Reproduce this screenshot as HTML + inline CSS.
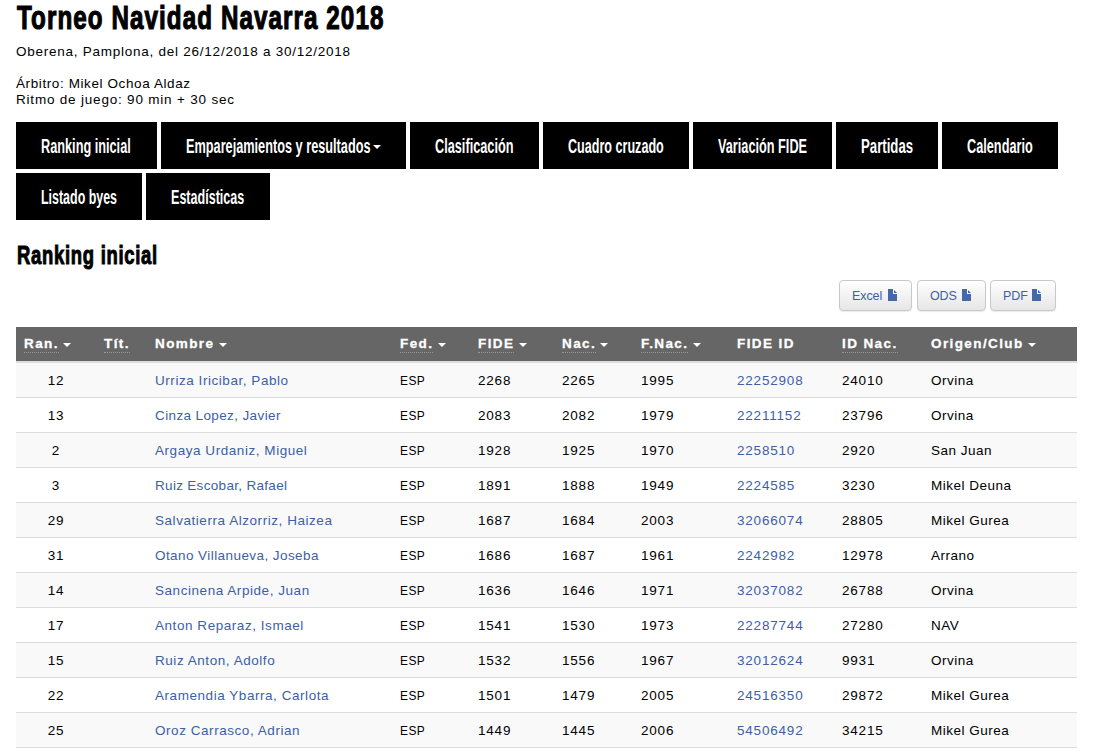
<!DOCTYPE html>
<html><head><meta charset="utf-8">
<style>
*{box-sizing:border-box}
html,body{margin:0;padding:0;background:#fff;width:1108px;height:753px;overflow:hidden;position:relative}
body{font-family:"Liberation Sans",sans-serif;color:#000;font-size:13px}
.abs{position:absolute;white-space:nowrap}
.cond{display:inline-block;transform-origin:0 0;font-weight:700}
#title{left:17px;top:-1px;font-size:34px;line-height:36px;-webkit-text-stroke:1.2px #000;letter-spacing:1.5px}
.info{left:16px;font-size:13.5px;letter-spacing:0.75px;line-height:16px}
.nav{position:absolute;background:#000;color:#fff;height:47px}
.ncaret{position:absolute;top:145px;width:0;height:0;border-left:4px solid transparent;border-right:4px solid transparent;border-top:4px solid #fff;top:23px}
.nav span{position:absolute;top:13px;font-size:20px;line-height:22px;font-weight:700;transform-origin:0 0;white-space:nowrap}
#h2{left:17px;top:240px;font-size:26px;line-height:30px;-webkit-text-stroke:1px #000;letter-spacing:1px}
.btn{position:absolute;top:280px;height:31px;border:1px solid #c8c8c8;border-radius:4px;background:linear-gradient(#fff,#e6e6e6);box-shadow:0 1px 1px rgba(0,0,0,.08)}
.btn .t{position:absolute;top:8px;font-size:12.5px;line-height:14px;color:#3c5fa6;letter-spacing:-0.1px}
.btn svg{position:absolute;top:8px;width:9px;height:12px}
table{position:absolute;left:16px;top:327px;width:1061px;border-collapse:collapse;table-layout:fixed}
th{background:#666;color:#fff;height:35px;padding:0 0 1px 8px;text-align:left;font-size:13.5px;font-weight:700;letter-spacing:1.4px;-webkit-text-stroke:0.3px #fff;border-bottom:2px solid #ddd;white-space:nowrap}
td{height:35px;padding:10px 0 0 8px;vertical-align:top;line-height:16px;border-bottom:1px solid #ddd;font-size:13.5px;letter-spacing:0.5px;white-space:nowrap}
td.n{letter-spacing:0.8px}
td.e{letter-spacing:0.5px}
td.e span{display:inline-block;transform:scaleX(0.885);transform-origin:0 0}
td a.nm{letter-spacing:0.55px}
td.c{text-align:center;padding-left:0;padding-right:0}
tr:nth-child(odd) td{background:#f9f9f9}
a{color:#3c5fa6;text-decoration:none}
abbr{text-decoration:none;border-bottom:1px dotted #999;padding-bottom:1px}
.caret{display:inline-block;width:0;height:0;border-left:4px solid transparent;border-right:4px solid transparent;border-top:4px solid #fff;vertical-align:middle;margin-left:4.3px;position:relative;top:1px}
</style></head><body>
<div id="title" class="abs"><span class="cond" style="transform:scaleX(0.712)">Torneo Navidad Navarra 2018</span></div>
<div class="abs info" style="top:44px">Oberena, Pamplona, del 26/12/2018 a 30/12/2018</div>
<div class="abs info" style="top:76px;letter-spacing:0.6px">Árbitro: Mikel Ochoa Aldaz</div>
<div class="abs info" style="top:92px;letter-spacing:0.8px">Ritmo de juego: 90 min + 30 sec</div>

<div class="nav" style="left:16px;top:122px;width:141px"><span style="left:25px;transform:scaleX(0.636)">Ranking inicial</span></div>
<div class="nav" style="left:161px;top:122px;width:245px"><span style="left:25px;transform:scaleX(0.636)">Emparejamientos y resultados</span><i class="ncaret" style="left:212px"></i></div>
<div class="nav" style="left:410px;top:122px;width:129px"><span style="left:25px;transform:scaleX(0.636)">Clasificación</span></div>
<div class="nav" style="left:543px;top:122px;width:146px"><span style="left:25px;transform:scaleX(0.629)">Cuadro cruzado</span></div>
<div class="nav" style="left:693px;top:122px;width:139px"><span style="left:25px;transform:scaleX(0.636)">Variación FIDE</span></div>
<div class="nav" style="left:836px;top:122px;width:102px"><span style="left:25px;transform:scaleX(0.66)">Partidas</span></div>
<div class="nav" style="left:942px;top:122px;width:116px"><span style="left:25px;transform:scaleX(0.636)">Calendario</span></div>
<div class="nav" style="left:16px;top:173px;width:126px"><span style="left:25px;transform:scaleX(0.622)">Listado byes</span></div>
<div class="nav" style="left:146px;top:173px;width:124px"><span style="left:25px;transform:scaleX(0.628)">Estadísticas</span></div>

<div id="h2" class="abs"><span class="cond" style="transform:scaleX(0.71)">Ranking inicial</span></div>

<div class="btn" style="left:839px;width:73px"><span class="t" style="left:12px">Excel</span><svg style="left:48px" viewBox="0 0 9 12"><path d="M0 0H5V5H9V12H0Z" fill="#4668a8"/><path d="M6 1V4H9Z" fill="#4668a8"/></svg></div>
<div class="btn" style="left:917px;width:69px"><span class="t" style="left:12px">ODS</span><svg style="left:44px" viewBox="0 0 9 12"><path d="M0 0H5V5H9V12H0Z" fill="#4668a8"/><path d="M6 1V4H9Z" fill="#4668a8"/></svg></div>
<div class="btn" style="left:990px;width:66px"><span class="t" style="left:12px">PDF</span><svg style="left:41px" viewBox="0 0 9 12"><path d="M0 0H5V5H9V12H0Z" fill="#4668a8"/><path d="M6 1V4H9Z" fill="#4668a8"/></svg></div>

<table>
<colgroup><col style="width:80px"><col style="width:51px"><col style="width:245px"><col style="width:78px"><col style="width:84px"><col style="width:79px"><col style="width:96px"><col style="width:105px"><col style="width:89px"><col style="width:154px"></colgroup>
<thead><tr>
<th><abbr>Ran.</abbr><span class="caret"></span></th>
<th><abbr>Tít.</abbr></th>
<th>Nombre<span class="caret"></span></th>
<th><abbr>Fed.</abbr><span class="caret"></span></th>
<th><abbr>FIDE</abbr><span class="caret"></span></th>
<th><abbr>Nac.</abbr><span class="caret"></span></th>
<th><abbr>F.Nac.</abbr><span class="caret"></span></th>
<th>FIDE ID</th>
<th><abbr>ID Nac.</abbr></th>
<th>Origen/Club<span class="caret"></span></th>
</tr></thead>
<tbody>
<tr><td class="c n">12</td><td></td><td><a class="nm">Urriza Iricibar, Pablo</a></td><td class="e"><span>ESP</span></td><td class="n">2268</td><td class="n">2265</td><td class="n">1995</td><td class="n"><a>22252908</a></td><td class="n">24010</td><td>Orvina</td></tr>
<tr><td class="c n">13</td><td></td><td><a class="nm" style="letter-spacing:0.38px">Cinza Lopez, Javier</a></td><td class="e"><span>ESP</span></td><td class="n">2083</td><td class="n">2082</td><td class="n">1979</td><td class="n"><a>22211152</a></td><td class="n">23796</td><td>Orvina</td></tr>
<tr><td class="c n">2</td><td></td><td><a class="nm">Argaya Urdaniz, Miguel</a></td><td class="e"><span>ESP</span></td><td class="n">1928</td><td class="n">1925</td><td class="n">1970</td><td class="n"><a>2258510</a></td><td class="n">2920</td><td>San Juan</td></tr>
<tr><td class="c n">3</td><td></td><td><a class="nm" style="letter-spacing:0.31px">Ruiz Escobar, Rafael</a></td><td class="e"><span>ESP</span></td><td class="n">1891</td><td class="n">1888</td><td class="n">1949</td><td class="n"><a>2224585</a></td><td class="n">3230</td><td>Mikel Deuna</td></tr>
<tr><td class="c n">29</td><td></td><td><a class="nm">Salvatierra Alzorriz, Haizea</a></td><td class="e"><span>ESP</span></td><td class="n">1687</td><td class="n">1684</td><td class="n">2003</td><td class="n"><a>32066074</a></td><td class="n">28805</td><td>Mikel Gurea</td></tr>
<tr><td class="c n">31</td><td></td><td><a class="nm" style="letter-spacing:0.43px">Otano Villanueva, Joseba</a></td><td class="e"><span>ESP</span></td><td class="n">1686</td><td class="n">1687</td><td class="n">1961</td><td class="n"><a>2242982</a></td><td class="n">12978</td><td>Arrano</td></tr>
<tr><td class="c n">14</td><td></td><td><a class="nm">Sancinena Arpide, Juan</a></td><td class="e"><span>ESP</span></td><td class="n">1636</td><td class="n">1646</td><td class="n">1971</td><td class="n"><a>32037082</a></td><td class="n">26788</td><td>Orvina</td></tr>
<tr><td class="c n">17</td><td></td><td><a class="nm">Anton Reparaz, Ismael</a></td><td class="e"><span>ESP</span></td><td class="n">1541</td><td class="n">1530</td><td class="n">1973</td><td class="n"><a>22287744</a></td><td class="n">27280</td><td>NAV</td></tr>
<tr><td class="c n">15</td><td></td><td><a class="nm">Ruiz Anton, Adolfo</a></td><td class="e"><span>ESP</span></td><td class="n">1532</td><td class="n">1556</td><td class="n">1967</td><td class="n"><a>32012624</a></td><td class="n">9931</td><td>Orvina</td></tr>
<tr><td class="c n">22</td><td></td><td><a class="nm">Aramendia Ybarra, Carlota</a></td><td class="e"><span>ESP</span></td><td class="n">1501</td><td class="n">1479</td><td class="n">2005</td><td class="n"><a>24516350</a></td><td class="n">29872</td><td>Mikel Gurea</td></tr>
<tr><td class="c n">25</td><td></td><td><a class="nm">Oroz Carrasco, Adrian</a></td><td class="e"><span>ESP</span></td><td class="n">1449</td><td class="n">1445</td><td class="n">2006</td><td class="n"><a>54506492</a></td><td class="n">34215</td><td>Mikel Gurea</td></tr>
</tbody>
</table>
</body></html>
